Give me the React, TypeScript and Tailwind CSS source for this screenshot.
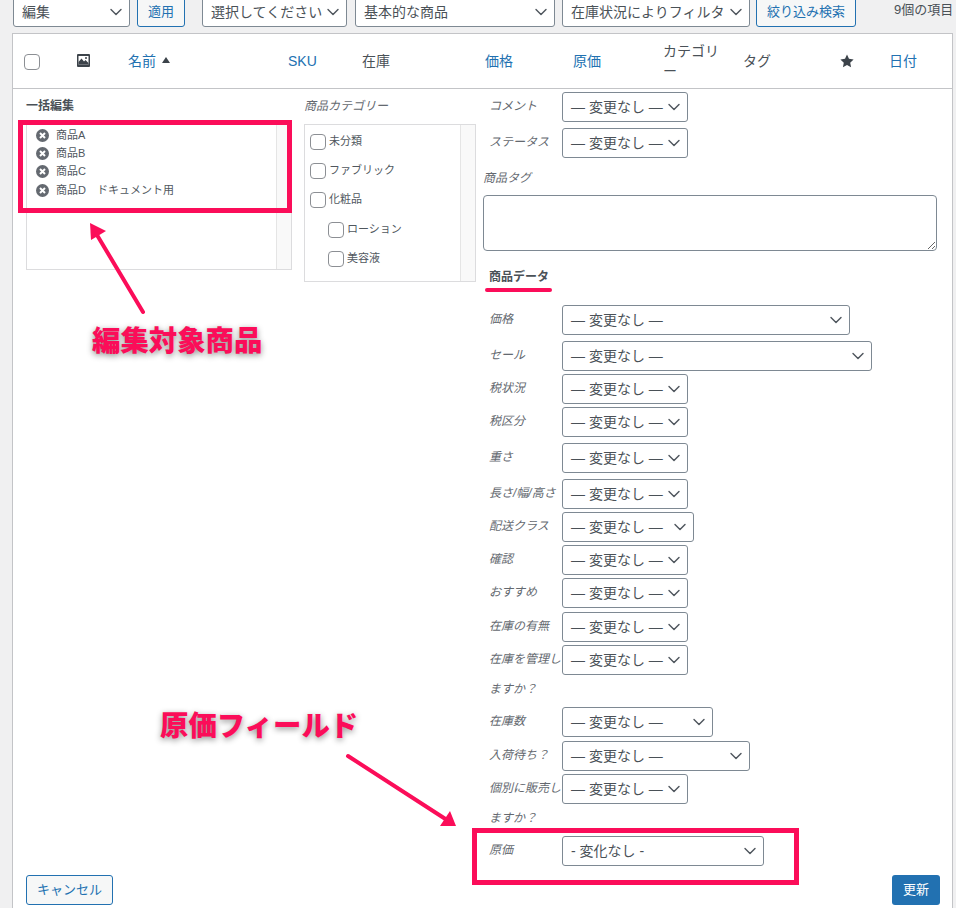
import { ChevronDown } from "lucide-react";

const pink = "#fb0d59";

function Select({ label, className }: { label: string; className: string }) {
  return (
    <div className={`flex h-[30px] shrink-0 items-center justify-between rounded-[3px] border border-[#7e8993] bg-white pl-2 pr-[3px] text-sm leading-[28px] whitespace-nowrap text-[#4a5157] ${className}`}>
      <span>{label}</span>
      <ChevronDown size={20} strokeWidth={1.7} className="shrink-0 text-[#50575e]" />
    </div>
  );
}

function Field({ title, w, mt, value = "— 変更なし —" }: { title: React.ReactNode; w: string; mt: string; value?: string }) {
  return (
    <div className={`flex items-start ${mt}`}>
      <span className="-mt-[1px] w-[79px] shrink-0 pl-[6px] text-xs leading-[30px] whitespace-nowrap text-[#646970] italic">{title}</span>
      <Select label={value} className={w} />
    </div>
  );
}

const products = ["商品A", "商品B", "商品C", "商品D　ドキュメント用"];

const categories = [
  { name: "未分類", cls: "ml-[5px] mt-[9px]" },
  { name: "ファブリック", cls: "ml-[5px] mt-[13px]" },
  { name: "化粧品", cls: "ml-[5px] mt-[13px]" },
  { name: "ローション", cls: "ml-[23px] mt-[14px]" },
  { name: "美容液", cls: "ml-[23px] mt-[13px]" },
];

function Check({ className }: { className?: string }) {
  return <span className={`block size-4 shrink-0 rounded-[4px] border border-[#8c8f94] bg-white ${className ?? ""}`} />;
}

function RemoveIcon() {
  return (
    <svg width="13" height="13" viewBox="0 0 13 13" className="shrink-0">
      <circle cx="6.5" cy="6.5" r="6.5" fill="#646970" />
      <path d="M4 4l5 5M9 4l-5 5" stroke="#fff" strokeWidth="2" />
    </svg>
  );
}

export default function App() {
  return (
    <div className="relative h-[908px] w-[956px] overflow-hidden bg-[#f0f0f1] font-['Liberation_Sans','Noto_Sans_CJK_JP',sans-serif] text-[13px] text-[#4a5157]">
      {/* toolbar */}
      <div className="-mt-[3px] mb-[6px] flex pl-[13px]">
        <Select label="編集" className="w-[117px]" />
        <button className="ml-[7px] h-[30px] w-[48px] rounded-[3px] border border-[#2271b1] bg-[#f6f7f7] text-[#2271b1]">適用</button>
        <Select label="選択してください" className="ml-[17px] w-[145px]" />
        <Select label="基本的な商品" className="ml-[8px] w-[200px]" />
        <Select label="在庫状況によりフィルタ" className="ml-[7px] w-[188px]" />
        <button className="ml-[6px] h-[30px] w-[100px] rounded-[3px] border border-[#2271b1] bg-[#f6f7f7] text-[#2271b1]">絞り込み検索</button>
        <span className="ml-[38px] mt-[4px] leading-[18px] whitespace-nowrap">9個の項目</span>
      </div>

      {/* panel */}
      <div className="ml-[12px] mr-[3px] border border-[#c3c4c7] bg-white pb-[10px]">
        <div className="grid h-[55px] grid-cols-[52px_52px_160px_74px_123px_88px_90px_80px_97px_49px_1fr] items-center border-b border-[#c3c4c7] pl-[11px] text-sm leading-[20px]">
          <Check className="mt-[1px]" />
          <svg width="13" height="13" viewBox="0 0 13 13" className="mb-[1px] ml-[1px]">
            <rect width="13" height="13" rx="1" fill="#3c434a" />
            <rect x="1.5" y="2" width="10" height="8.5" fill="#fff" />
            <path d="M1.5 10.5V8l3-3.5 2.5 3 1.5-1.5 3 3v1.5z" fill="#3c434a" />
            <circle cx="9" cy="4" r="1" fill="#3c434a" />
          </svg>
          <span className="flex items-center text-[#2271b1]">
            名前
            <svg width="8" height="6" viewBox="0 0 8 6" className="ml-[6px] mb-[3px]"><path d="M4 0l4 6H0z" fill="#3c434a" /></svg>
          </span>
          <span className="text-[#2271b1]">SKU</span>
          <span>在庫</span>
          <span className="text-[#2271b1]">価格</span>
          <span className="text-[#2271b1]">原価</span>
          <span>カテゴリ<br />ー</span>
          <span>タグ</span>
          <svg width="14" height="14" viewBox="0 0 24 24"><path d="M12 1l3.4 7.3 7.9 1-5.8 5.5 1.5 7.9-7-3.9-7 3.9 1.5-7.9L.7 9.3l7.9-1z" fill="#3c434a" /></svg>
          <span className="text-[#2271b1]">日付</span>
        </div>

        <div className="flex items-start pt-[3px]">
          <div className="ml-[13px] w-[266px] shrink-0">
            <h4 className="mt-[5px] text-xs leading-[18px] font-bold">一括編集</h4>
            <div className="mt-[9px] flex h-[146px] border border-[#dcdcde]">
              <ul className="flex-1 pt-[1px] pl-[9px] text-[11px] text-[#50575e]">
                {products.map((p) => (
                  <li key={p} className="flex h-[18px] items-center gap-[7px] leading-[18px] whitespace-nowrap last:mt-[1px]">
                    <RemoveIcon />
                    {p}
                  </li>
                ))}
              </ul>
              <div className="w-[15px] border-l border-[#e5e5e5] bg-[#f9f9f9]" />
            </div>
          </div>

          <div className="ml-[12px] w-[172px] shrink-0">
            <h4 className="mt-[5px] text-xs leading-[18px] text-[#646970] italic">商品カテゴリー</h4>
            <div className="mt-[9px] flex h-[158px] border border-[#dcdcde]">
              <ul className="flex-1 text-[11px] text-[#50575e]">
                {categories.map((c) => (
                  <li key={c.name} className={`flex h-4 items-center gap-[3px] leading-[14px] ${c.cls}`}>
                    <Check />
                    <span className="-mt-[2px] whitespace-nowrap">{c.name}</span>
                  </li>
                ))}
              </ul>
              <div className="w-[15px] border-l border-[#e5e5e5] bg-[#f9f9f9]" />
            </div>
          </div>

          <div className="ml-[7px] w-[454px] shrink-0">
            <Field title="コメント" w="w-[126px]" mt="" />
            <Field title="ステータス" w="w-[126px]" mt="mt-[6px]" />
            <p className="mt-[11px] text-xs leading-[18px] text-[#646970] italic">商品タグ</p>
            <textarea className="mt-[8px] block h-[56px] w-[454px] rounded-[4px] border border-[#7e8993] bg-white" />
            <h4 className="mt-[17px] pl-[6px] text-xs leading-[18px] font-bold">商品データ</h4>
            <Field title="価格" w="w-[288px]" mt="mt-[19px]" />
            <Field title="セール" w="w-[310px]" mt="mt-[6px]" />
            <Field title="税状況" w="w-[126px]" mt="mt-[3px]" />
            <Field title="税区分" w="w-[126px]" mt="mt-[3px]" />
            <Field title="重さ" w="w-[126px]" mt="mt-[6px]" />
            <Field title="長さ/幅/高さ" w="w-[126px]" mt="mt-[6px]" />
            <Field title="配送クラス" w="w-[132px]" mt="mt-[3px]" />
            <Field title="確認" w="w-[126px]" mt="mt-[3px]" />
            <Field title="おすすめ" w="w-[126px]" mt="mt-[3px]" />
            <Field title="在庫の有無" w="w-[126px]" mt="mt-[4px]" />
            <Field title={<>在庫を管理し<br />ますか？</>} w="w-[126px]" mt="mt-[3px]" />
            <Field title="在庫数" w="w-[151px]" mt="mt-[3px]" />
            <Field title="入荷待ち？" w="w-[188px]" mt="mt-[4px]" />
            <Field title={<>個別に販売し<br />ますか？</>} w="w-[126px]" mt="mt-[3px]" />
            <Field title="原価" w="w-[202px]" mt="mt-[3px]" value="- 変化なし -" />
          </div>
        </div>

        <div className="mt-[9px] ml-[13px] mr-[12px] flex justify-between">
          <button className="h-[30px] w-[87px] rounded-[3px] border border-[#2271b1] bg-[#f6f7f7] text-[#2271b1]">キャンセル</button>
          <button className="h-[30px] w-[48px] rounded-[3px] bg-[#2271b1] text-white">更新</button>
        </div>
      </div>

      {/* annotations drawn over the screenshot */}
      <div className="absolute left-[18px] top-[120px] h-[93px] w-[274px] border-[5px] border-[#fb0d59]" />
      <div className="absolute left-[472px] top-[828px] h-[57px] w-[327px] border-[5px] border-[#fb0d59]" />
      <div className="absolute left-[485px] top-[288px] h-[4px] w-[67px] rounded-full bg-[#fb0d59]" />
      <span className="absolute left-[92px] top-[321px] text-[28.4px] leading-[40px] font-black whitespace-nowrap text-[#fb0d59] [-webkit-text-stroke:5px_#fff] [paint-order:stroke_fill] [text-shadow:0_2px_6px_rgba(0,0,0,0.45)]">編集対象商品</span>
      <span className="absolute left-[160px] top-[706px] text-[28.4px] leading-[40px] font-black whitespace-nowrap text-[#fb0d59] [-webkit-text-stroke:5px_#fff] [paint-order:stroke_fill] [text-shadow:0_2px_6px_rgba(0,0,0,0.45)]">原価フィールド</span>
      <svg className="pointer-events-none absolute inset-0" width="956" height="908" viewBox="0 0 956 908">
        <path d="M143 312L97 235" stroke={pink} strokeWidth="4" strokeLinecap="round" />
        <path d="M90 223l16 8-15 9z" fill={pink} />
        <path d="M348 756L447 820" stroke={pink} strokeWidth="4" strokeLinecap="round" />
        <path d="M456 826l-16 0 10-15z" fill={pink} />
      </svg>
    </div>
  );
}
